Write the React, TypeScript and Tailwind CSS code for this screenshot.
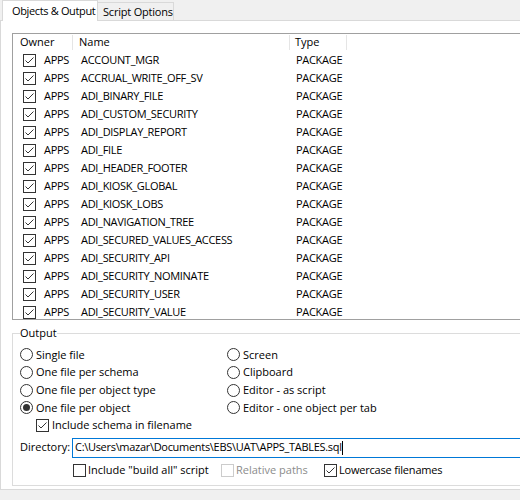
import React from "react";

const rows = [
  "ACCOUNT_MGR",
  "ACCRUAL_WRITE_OFF_SV",
  "ADI_BINARY_FILE",
  "ADI_CUSTOM_SECURITY",
  "ADI_DISPLAY_REPORT",
  "ADI_FILE",
  "ADI_HEADER_FOOTER",
  "ADI_KIOSK_GLOBAL",
  "ADI_KIOSK_LOBS",
  "ADI_NAVIGATION_TREE",
  "ADI_SECURED_VALUES_ACCESS",
  "ADI_SECURITY_API",
  "ADI_SECURITY_NOMINATE",
  "ADI_SECURITY_USER",
  "ADI_SECURITY_VALUE",
];

function CheckBox({ checked, disabled }: { checked?: boolean; disabled?: boolean }) {
  return (
    <span
      className={`flex w-[13px] h-[13px] shrink-0 border bg-white ${
        disabled ? "border-[#cccccc]" : "border-[#333333]"
      }`}
    >
      {checked && (
        <svg width="11" height="11" viewBox="0 0 11 11">
          <path d="M1.5 5.5 L4 8 L9.5 2.5" fill="none" stroke="#333333" strokeWidth="1" />
        </svg>
      )}
    </span>
  );
}

function Radio({ checked }: { checked?: boolean }) {
  return (
    <span className="flex items-center justify-center w-[13px] h-[13px] shrink-0 rounded-full border border-[#333333] bg-white">
      {checked && <span className="w-[7px] h-[7px] rounded-full bg-[#333333]" />}
    </span>
  );
}

function RadioRow({ label, checked }: { label: string; checked?: boolean }) {
  return (
    <div className="flex items-center h-[17.67px]">
      <Radio checked={checked} />
      <span className="ml-[3px]">{label}</span>
    </div>
  );
}

export default function App() {
  return (
    <div className="w-[520px] h-[500px] overflow-hidden bg-[#f0f0f0] text-[11px] text-black whitespace-nowrap font-['Open_Sans','Liberation_Sans',sans-serif]">
      {/* tab strip */}
      <div className="flex items-end h-[20px] pl-[2px]">
        <div className="relative z-10 h-[21px] -mb-px w-[96px] bg-white border border-b-0 border-[#d9d9d9] pl-[9px] leading-[19px] tracking-[-0.35px]">
          Objects &amp; Output
        </div>
        <div className="h-[18px] w-[76px] border border-l-0 border-b-0 border-[#d9d9d9] bg-[#f0f0f0] pl-[5px] leading-[18px] tracking-[-0.2px]">
          Script Options
        </div>
      </div>

      {/* tab page */}
      <div className="w-[560px] h-[470px] bg-white border border-[#d9d9d9] pl-[11px] pt-[12px]">
        {/* object list */}
        <div className="w-[540px] h-[287px] border border-[#a0a0a0] overflow-hidden">
          <div className="flex h-[17px] items-center">
            <div className="w-[59px] pl-[7px]">Owner</div>
            <div className="w-px h-[15px] bg-[#e5e5e5]" />
            <div className="w-[216px] pl-[6px]">Name</div>
            <div className="w-px h-[15px] bg-[#e5e5e5]" />
            <div className="w-[56px] pl-[5px]">Type</div>
            <div className="w-px h-[15px] bg-[#e5e5e5]" />
          </div>
          {rows.map((name) => (
            <div key={name} className="flex items-center h-[18px]">
              <div className="w-[68px] flex items-center pl-[10px]">
                <CheckBox checked />
                <span className="ml-[8px] tracking-[-0.3px]">APPS</span>
              </div>
              <div className="w-[215px] tracking-[-0.3px]">{name}</div>
              <div className="tracking-[-0.3px]">PACKAGE</div>
            </div>
          ))}
        </div>

        {/* output group */}
        <div className="relative mt-[13px] w-[540px] h-[153px] border border-[#dcdcdc] pl-[7px] pt-[12px]">
          <span className="absolute -top-[9px] left-[7px] bg-white leading-[16px]">Output</span>
          <div className="grid grid-cols-[207px_1fr]">
            <div>
              <RadioRow label="Single file" />
              <RadioRow label="One file per schema" />
              <RadioRow label="One file per object type" />
              <RadioRow label="One file per object" checked />
            </div>
            <div>
              <RadioRow label="Screen" />
              <RadioRow label="Clipboard" />
              <RadioRow label="Editor - as script" />
              <RadioRow label="Editor - one object per tab" />
            </div>
          </div>
          <div className="flex items-center h-[18px] pl-[16px]">
            <CheckBox checked />
            <span className="ml-[3px]">Include schema in filename</span>
          </div>
          <div className="flex items-center mt-[3px] h-[20px]">
            <span className="w-[52px]">Directory:</span>
            <div className="flex-1 h-[20px] border border-[#0078d7] flex items-center pl-[2px]">
              <span className="tracking-[-0.3px]">C:\Users\mazar\Documents\EBS\UAT\APPS_TABLES.sql</span>
              <span className="w-px h-[14px] bg-black" />
            </div>
          </div>
          <div className="flex items-center mt-[4px] h-[18px]">
            <div className="flex items-center ml-[53px] w-[148px]">
              <CheckBox />
              <span className="ml-[2px]">Include "build all" script</span>
            </div>
            <div className="flex items-center w-[103px]">
              <CheckBox disabled />
              <span className="ml-[2px] text-[#8c8c8c]">Relative paths</span>
            </div>
            <div className="flex items-center">
              <CheckBox checked />
              <span className="ml-[2px] tracking-[-0.2px]">Lowercase filenames</span>
            </div>
          </div>
        </div>
      </div>
    </div>
  );
}
